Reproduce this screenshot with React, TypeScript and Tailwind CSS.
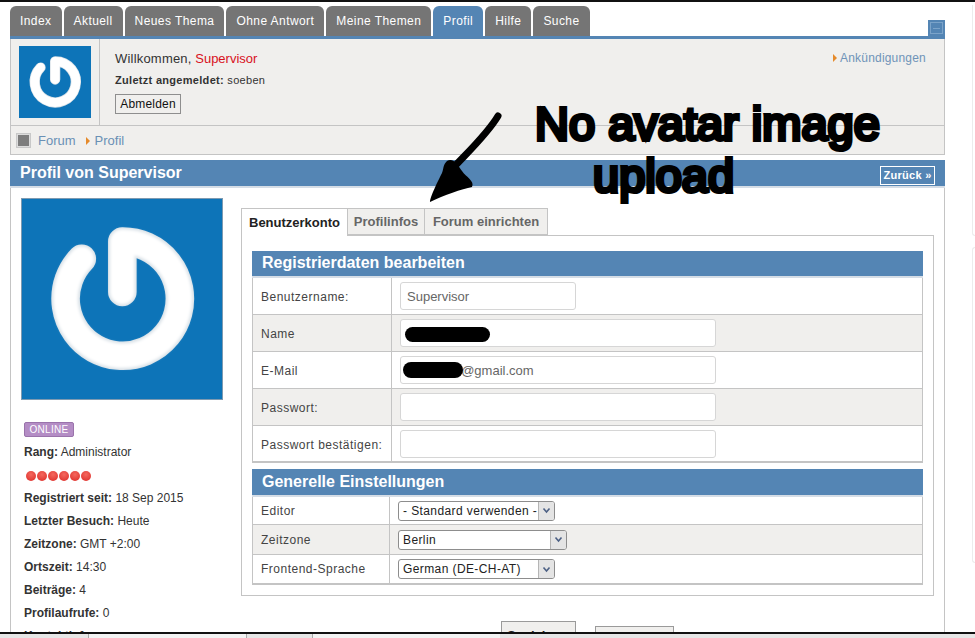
const tabs = ['Index', 'Aktuell', 'Neues Thema', 'Ohne Antwort', 'Meine Themen', 'Profil', 'Hilfe', 'Suche'];

function Logo({ className }: { className: string }) {
  return (
    <svg viewBox="0 0 602 602" className={className}>
      <defs>
        <filter id="soft" x="-20%" y="-20%" width="140%" height="140%">
          <feGaussianBlur stdDeviation="5" />
        </filter>
      </defs>
      <rect width="602" height="602" fill="#0d74b8" />
      <path d="M180 180 A172 172 0 1 0 302 128 L302 280" fill="none" stroke="#d9e1e7" strokeWidth="86" strokeLinecap="round" strokeLinejoin="round" />
      <path d="M180 180 A172 172 0 1 0 302 128 L302 280" fill="none" stroke="#ffffff" strokeWidth="74" strokeLinecap="round" strokeLinejoin="round" filter="url(#soft)" />
    </svg>
  );
}

function Caret() {
  return <span className="inline-block w-0 h-0 border-y-[4px] border-y-transparent border-l-[4px] border-l-[#e58a2b]" />;
}

function Info({ label, value }: { label: string; value: string }) {
  return (
    <div className="h-[23px] leading-[23px] pl-[3px] text-[12px] text-[#333]">
      <b>{label}</b> {value}
    </div>
  );
}

function SectionHead({ title, className }: { title: string; className: string }) {
  return (
    <div className={`bg-[#5485b4] border-b-2 border-[#d5dde6] pl-[10px] text-white font-bold text-[16px] flex items-center ${className}`}>
      {title}
    </div>
  );
}

function InputRow({ label, value, width, shaded, last, blot }: { label: string; value?: string; width: string; shaded?: boolean; last?: boolean; blot?: string }) {
  return (
    <div className={`h-[37px] flex border-x border-[#c4c4c4] ${last ? 'border-b-2' : 'border-b'} ${shaded ? 'bg-[#f0efed]' : 'bg-white'}`}>
      <div className="w-[139px] border-r border-[#c4c4c4] pl-[8px] pt-[2px] flex items-center text-[12px] tracking-[0.5px] text-[#444]">{label}</div>
      <div className="pl-[8px] pt-[4px] relative">
        <input
          readOnly
          defaultValue={value}
          className={`${width} h-[28px] bg-white border border-[#d6d6d6] rounded-[3px] px-[6px] text-[13px] text-[#666]`}
        />
        {blot === 'name' && <div className="absolute left-[13px] top-[12px] w-[85px] h-[15px] bg-black rounded-[8px]" />}
        {blot === 'mail' && <div className="absolute left-[11px] top-[10px] w-[60px] h-[16px] bg-black rounded-[8px]" />}
      </div>
    </div>
  );
}

function SelectRow({ label, value, width, height, shaded, last }: { label: string; value: string; width: string; height: string; shaded?: boolean; last?: boolean }) {
  return (
    <div className={`${height} flex border-x border-[#c4c4c4] ${last ? 'border-b-2' : 'border-b'} ${shaded ? 'bg-[#f0efed]' : 'bg-white'}`}>
      <div className="w-[137px] border-r border-[#c4c4c4] pl-[8px] flex items-center text-[12px] tracking-[0.5px] text-[#444]">{label}</div>
      <div className="pl-[8px] flex items-center">
        <div className={`${width} h-[20px] bg-white border border-[#8d8d8d] rounded-[3px] flex items-center justify-between text-[12px] tracking-[0.4px] text-[#222] pl-[4px] overflow-hidden`}>
          <span className="whitespace-nowrap">{value}</span>
          <span className="w-[16px] h-full bg-[#e4e4e4] border-l border-[#b5b5b5] flex items-center justify-center shrink-0">
            <svg width="9" height="7" viewBox="0 0 9 7"><path d="M1.5 1.5 L4.5 5 L7.5 1.5" fill="none" stroke="#4d6185" strokeWidth="1.6" /></svg>
          </span>
        </div>
      </div>
    </div>
  );
}

export default function App() {
  return (
    <div className="relative w-[975px] h-[638px] overflow-hidden bg-white font-['Liberation_Sans',Arial,sans-serif] text-[#333]">
      <div className="h-[2px] bg-[#111]" />

      <div className="flex">
        <div className="w-[935px] shrink-0 ml-[10px]">
          {/* main nav */}
          <div className="flex gap-[2px] mt-[4px] h-[30px]">
            {tabs.map((t) => (
              <div
                key={t}
                className={`px-[10px] rounded-t-[6px] text-white text-[12px] tracking-[0.43px] flex items-center ${t === 'Profil' ? 'bg-[#5485b4]' : 'bg-[#757575]'}`}
              >
                {t}
              </div>
            ))}
            <div className="ml-auto self-end w-[17px] h-[16px] bg-[#5485b4] flex items-center justify-center">
              <div className="w-[13px] h-[12px] border border-[#7ba3c9] flex items-center justify-center">
                <div className="w-[7px] h-px bg-[#7ba3c9]" />
              </div>
            </div>
          </div>
          <div className="h-[3px] bg-[#5485b4]" />

          {/* user panel */}
          <div className="h-[87px] bg-[#f0efed] border-x border-b border-[#c4c4c4] flex">
            <div className="w-[89px] border-r border-[#c4c4c4] pl-[8px] pt-[7px]">
              <Logo className="w-[72px] h-[72px]" />
            </div>
            <div className="pl-[15px] pt-[12px]">
              <div className="text-[13px] leading-[16px]">
                <span className="tracking-[0.2px]">Willkommen,</span> <span className="text-[#d8111c]">Supervisor</span>
              </div>
              <div className="text-[11px] tracking-[0.3px] mt-[6px] leading-[14px]">
                <b>Zuletzt angemeldet:</b> soeben
              </div>
              <div className="mt-[7px] w-[66px] h-[20px] border border-[#8e8e8e] flex items-center justify-center text-[12px] tracking-[0.2px] text-[#111]">
                Abmelden
              </div>
            </div>
            <div className="ml-auto pr-[18px] pt-[12px] flex items-center gap-[3px] h-[14px] box-content text-[12px] tracking-[0.2px] text-[#6f93b8]">
              <Caret />
              Ankündigungen
            </div>
          </div>

          {/* breadcrumb */}
          <div className="h-[29px] bg-[#f0efed] border-x border-b border-[#c4c4c4] flex items-center pl-[5px] text-[13px] text-[#6a90b5]">
            <div className="w-[15px] h-[15px] bg-[#7d7d7d] border-2 border-[#dcdcdc] outline outline-[#c8c8c8] -outline-offset-1" />
            <span className="ml-[7px] pt-[2px]">Forum</span>
            <span className="ml-[10px] mr-[5px] flex pt-[2px]"><Caret /></span>
            <span className="pt-[2px]">Profil</span>
          </div>

          {/* profile title */}
          <div className="mt-[5px] h-[28px] bg-[#5485b4] border-b-2 border-[#d5dde6] flex items-center justify-between pl-[10px] pr-[10px]">
            <span className="text-white font-bold text-[16px]">Profil von Supervisor</span>
            <span className="mt-[5px] w-[55px] h-[19px] border border-white flex items-center justify-center text-white font-bold text-[11px] tracking-[0.3px]">Zurück »</span>
          </div>

          <div className="border-x border-[#c4c4c4] flex pl-[10px] pr-[10px] pt-[10px] pb-[40px]">
            {/* left column */}
            <div className="w-[220px] shrink-0">
              <Logo className="w-[202px] h-[202px] border border-[#7d9ab1]" />
              <div className="mt-[22px] ml-[3px] w-[50px] h-[15px] bg-[#b48dc5] border border-[#9a73ab] rounded-[2px] flex items-center justify-center text-white text-[10px] tracking-[0.3px]">ONLINE</div>
              <div className="mt-[4px]">
                <Info label="Rang:" value="Administrator" />
                <div className="h-[23px] pl-[2px] flex items-center">
                  <div className="flex pl-[3px] gap-px">
                    {[0, 1, 2, 3, 4, 5].map((d) => (
                      <span key={d} className="w-[10px] h-[10px] rounded-full bg-[radial-gradient(circle_at_50%_35%,#f4685e,#dc2b27)]" />
                    ))}
                  </div>
                </div>
                <Info label="Registriert seit:" value="18 Sep 2015" />
                <Info label="Letzter Besuch:" value="Heute" />
                <Info label="Zeitzone:" value="GMT +2:00" />
                <Info label="Ortszeit:" value="14:30" />
                <Info label="Beiträge:" value="4" />
                <Info label="Profilaufrufe:" value="0" />
                <Info label="Kontaktinfo" value="" />
              </div>
            </div>

            {/* right column */}
            <div className="w-[693px] pt-[10px]">
              <div className="flex h-[28px] font-bold text-[13px] relative z-10">
                <div className="w-[106px] bg-white border-t border-l border-[#c4c4c4] flex items-center justify-center text-[#222]">Benutzerkonto</div>
                <div className="w-[78px] h-[27px] bg-[#f0efed] border border-[#c4c4c4] flex items-center justify-center text-[#666]">Profilinfos</div>
                <div className="w-[123px] h-[27px] bg-[#f0efed] border border-l-0 border-[#c4c4c4] flex items-center justify-center text-[#666]">Forum einrichten</div>
              </div>
              <div className="-mt-px border border-[#c4c4c4] pt-[15px] px-[10px] pb-[10px]">
                <SectionHead title="Registrierdaten bearbeiten" className="h-[27px] pb-[2px]" />
                <InputRow label="Benutzername:" value="Supervisor" width="w-[176px]" />
                <InputRow label="Name" width="w-[316px]" shaded blot="name" />
                <InputRow label="E-Mail" value="               @gmail.com" width="w-[316px]" blot="mail" />
                <InputRow label="Passwort:" width="w-[316px]" shaded />
                <InputRow label="Passwort bestätigen:" width="w-[316px]" last />

                <SectionHead title="Generelle Einstellungen" className="h-[28px] mt-[6px]" />
                <SelectRow label="Editor" value="- Standard verwenden -" width="w-[157px]" height="h-[28px]" />
                <SelectRow label="Zeitzone" value="Berlin" width="w-[169px]" height="h-[30px]" shaded />
                <SelectRow label="Frontend-Sprache" value="German (DE-CH-AT)" width="w-[157px]" height="h-[30px]" last />
              </div>

              <div className="mt-[25px] ml-[260px] flex items-start gap-[19px]">
                <div className="w-[75px] h-[30px] bg-[#f0efed] border border-[#9a9a9a] pt-[4px] text-center font-bold text-[13px] text-[#222]">Speichern</div>
                <div className="mt-[5px] w-[79px] h-[30px] bg-[#f0efed] border border-[#9a9a9a] pt-[7px] text-center text-[13px] text-[#222]">Reset</div>
              </div>
            </div>
          </div>
        </div>

        {/* page edge */}
        <div className="flex-1 pl-[27px] pt-[3px] flex flex-col gap-[11px]">
          <div className="h-[231px] border-l border-b border-[#ececec] rounded-bl-[4px]" />
          <div className="h-[316px] border-l border-y border-[#ececec] rounded-l-[4px]" />
        </div>
      </div>

      {/* window edge over the page */}
      <div className="absolute left-0 right-0 top-[632px] h-[6px] bg-[#e6e6e6] border-t-2 border-[#111] flex">
        <div className="ml-[88px] w-[159px] bg-[#f3f3f3] border-x border-[#aaa]" />
        <div className="ml-[65px] w-[188px] bg-[#f3f3f3] border-l border-[#aaa]" />
      </div>

      {/* marker notes drawn on the screenshot */}
      <svg className="absolute left-[420px] top-[105px]" width="90" height="105" viewBox="0 0 90 105">
        <path d="M78 11 C68 28 50 45 34 62" fill="none" stroke="#000" strokeWidth="7" strokeLinecap="round" />
        <path d="M27 56 C33 52 38 60 42 66 C46 72 55 76 52 82 C42 84 24 90 10 97 C10 92 18 76 22 68 C24 62 23 60 27 56 Z" fill="#000" />
      </svg>
      <div className="absolute left-[535px] top-[100px] text-[47px] leading-none text-black whitespace-nowrap [-webkit-text-stroke:4px_black]">No avatar image</div>
      <div className="absolute left-[593px] top-[152px] text-[47px] leading-none text-black whitespace-nowrap [-webkit-text-stroke:4px_black]">upload</div>
    </div>
  );
}
